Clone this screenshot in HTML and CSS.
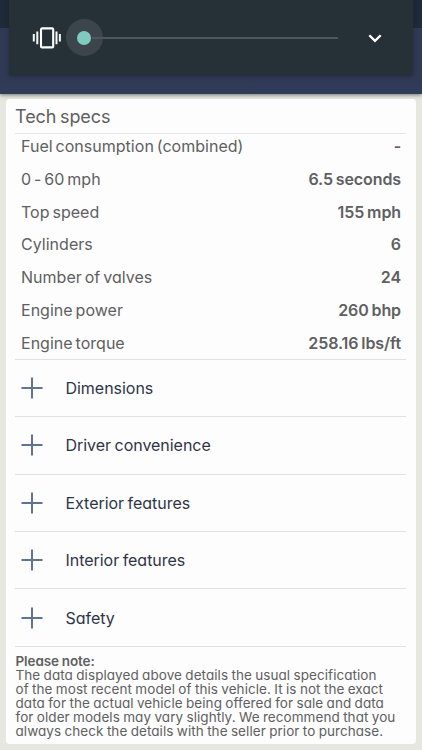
FILE: index.html
```html
<!DOCTYPE html>
<html lang="en">
<head>
<meta charset="utf-8">
<title>Tech specs</title>
<link rel="stylesheet" href="styles.css">
</head>
<body>
<header class="appbar">
  <div class="volume">
    <svg class="vibrate" width="30" height="24" viewBox="0 0 30 24"><rect x="9" y="2.4" width="12.2" height="19" rx="1" fill="none" stroke="#fff" stroke-width="2.1"/><path d="M1.8 8v7.5M5.3 5.5v12.7M24.5 5.5v12.7M27.9 8v7.5" stroke="#f2f8f7" stroke-width="2" fill="none"/></svg>
    <div class="slider"><div class="halo"><div class="thumb"></div></div><div class="track"></div></div>
    <svg class="chevron" width="14" height="10" viewBox="0 0 14 10"><path d="M1.3 2.2 7 7.8 12.7 2.2" fill="none" stroke="#fff" stroke-width="2.3"/></svg>
  </div>
</header>
<main class="card">
  <h1 class="title">Tech specs</h1>
  <dl class="specs">
    <div class="row"><dt>Fuel consumption (combined)</dt><dd>-</dd></div>
    <div class="row"><dt>0 - 60 mph</dt><dd>6.5 seconds</dd></div>
    <div class="row"><dt>Top speed</dt><dd>155 mph</dd></div>
    <div class="row"><dt>Cylinders</dt><dd>6</dd></div>
    <div class="row"><dt>Number of valves</dt><dd>24</dd></div>
    <div class="row"><dt>Engine power</dt><dd>260 bhp</dd></div>
    <div class="row"><dt>Engine torque</dt><dd>258.16 lbs/ft</dd></div>
  </dl>
  <ul class="sections">
    <li><svg class="plus" viewBox="0 0 22 22"><path d="M.5 11h21M11 .5v21"/></svg><span>Dimensions</span></li>
    <li><svg class="plus" viewBox="0 0 22 22"><path d="M.5 11h21M11 .5v21"/></svg><span>Driver convenience</span></li>
    <li><svg class="plus" viewBox="0 0 22 22"><path d="M.5 11h21M11 .5v21"/></svg><span>Exterior features</span></li>
    <li><svg class="plus" viewBox="0 0 22 22"><path d="M.5 11h21M11 .5v21"/></svg><span>Interior features</span></li>
    <li><svg class="plus" viewBox="0 0 22 22"><path d="M.5 11h21M11 .5v21"/></svg><span>Safety</span></li>
  </ul>
  <p class="note"><strong>Please note:</strong><br>The data displayed above details the usual specification<br>of the most recent model of this vehicle. It is not the exact<br>data for the actual vehicle being offered for sale and data<br>for older models may vary slightly. We recommend that you<br>always check the details with the seller prior to purchase.</p>
</main>
</body>
</html>
```
FILE: styles.css
```css
* { box-sizing: border-box; }
body {
  margin: 0;
  height: 750px;
  overflow: hidden;
  background: #e6e7e1;
  color: #606062;
  font-family: Inter, "Liberation Sans", sans-serif;
  font-feature-settings: "cv11";
}
.appbar {
  height: 93.5px;
  padding: 0 9px;
  background: linear-gradient(#1f2a3a 0 28px, #303a55 28px 80px, #303c5a);
  box-shadow: 0 1px 4px rgba(0, 0, 0, .5);
}
.volume {
  height: 75px;
  background: #263137;
  box-shadow: 0 1px 4px rgba(20, 25, 35, .5);
  display: flex;
  align-items: center;
  padding: 0 30px 0 23px;
}
.vibrate { margin-right: 3.5px; }
.volume > * { flex: none; }
.slider { width: 272px; display: flex; align-items: center; }
.halo {
  width: 37px;
  height: 37px;
  border-radius: 50%;
  background: #3b454b;
  display: flex;
  align-items: center;
  justify-content: center;
}
.thumb { width: 14px; height: 14px; border-radius: 50%; background: #80cbc0; }
.track { flex: 1; height: 2px; margin-left: -11px; background: #4c585d; }
.chevron { margin-left: 30.5px; }
.card {
  width: 410px;
  height: 645px;
  margin: 5.5px 0 0 6px;
  padding: 0 10px 0 9px;
  border-radius: 4px;
  background: #fdfdfd;
}
.title {
  margin: 0;
  height: 35px;
  border-bottom: 1px solid #e6e6e7;
  font-size: 18px;
  font-weight: 400;
  line-height: 35px;
  letter-spacing: -.05px;
  word-spacing: -1.5px;
}
.specs { margin: 0; height: 225.7px; border-bottom: 1px solid #e0e1e2; padding: 0 5px 0 6px; }
.row {
  display: flex;
  justify-content: space-between;
  height: 32.8px;
  font-size: 16px;
  line-height: 24px;
  word-spacing: -1.6px;
}
.row dt { letter-spacing: .02px; }
.row dd { margin: 0; font-weight: 600; letter-spacing: -.1px; word-spacing: -1px; }
.sections { list-style: none; margin: 0; padding: 0; }
.sections li {
  display: flex;
  align-items: center;
  gap: 22.5px;
  height: 57.45px;
  padding-left: 6px;
  border-bottom: 1px solid #e0e1e2;
  color: #2e3547;
  font-size: 16px;
  letter-spacing: -.03px;
  word-spacing: -1px;
}
.plus { width: 22px; height: 22px; fill: none; stroke: #607393; stroke-width: 2; }
.note {
  margin: 7px 0 0 .5px;
  font-size: 13.5px;
  line-height: 14.1px;
  letter-spacing: .06px;
  word-spacing: -.5px;
  white-space: nowrap;
}
.note strong { font-weight: 600; letter-spacing: -.1px; }
```
